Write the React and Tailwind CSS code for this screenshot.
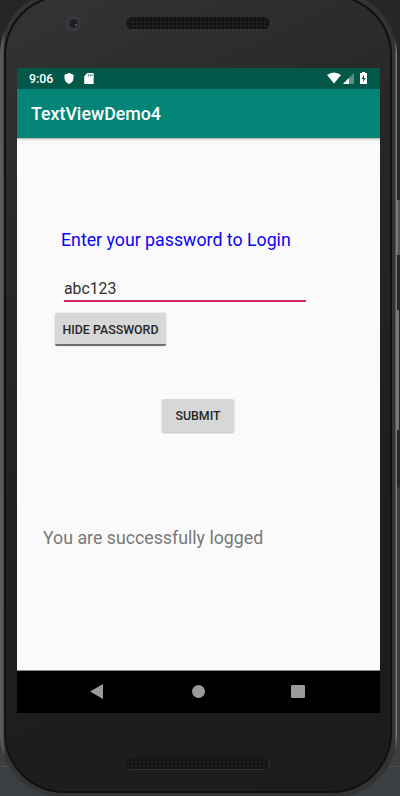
function Speaker() {
  return (
    <div className="ml-[119px] flex h-[13px] w-[145px] items-center rounded-full border-r border-b border-[#353535] bg-[#161616] px-[3px]">
      <div className="h-[11px] w-full bg-[radial-gradient(circle,#0a0a0a_0.6px,#1c1c1c_1.6px)] bg-[size:4px_4px]" />
    </div>
  );
}

function StatusBar() {
  return (
    <div className="flex h-[21px] items-center bg-[#045849] pl-3 text-white">
      <span className="w-[35px] pt-px text-[12.3px] font-medium leading-[20px]">9:06</span>
      <svg width="10" height="11" viewBox="0 0 10 11" fill="white">
        <path d="M5 0 9.5 1.7V5C9.5 7.8 7.5 10 5 11 2.5 10 .5 7.8 .5 5V1.7Z" />
      </svg>
      <svg className="ml-[10px]" width="10" height="11" viewBox="0 0 10 11">
        <path d="M3.3 0H9Q9.7 0 9.7.8V10Q9.7 11 8.8 11H1Q.2 11 .2 10V3.2Z" fill="white" />
        <path d="M4 1.2h1v2H4zM5.8 1.2h1v2h-1zM7.5 1.2h1v2h-1z" fill="#3b8678" />
      </svg>
      <svg className="mb-[2px] ml-[233px]" width="14" height="12" viewBox="0 0 14 12">
        <path d="M0 3Q7-2 14 3L7 11.5Z" fill="white" />
      </svg>
      <svg className="ml-[2px]" width="11" height="11" viewBox="0 0 11 11">
        <path d="M11 0V11H0Z" fill="#5a9085" />
        <path d="M6 5V11H0Z" fill="white" />
      </svg>
      <svg className="mb-[1px] ml-[6px]" width="7" height="12" viewBox="0 0 7 12">
        <path d="M2 0H5V1H7V12H0V1H2Z" fill="white" />
        <path d="M4 3 1.5 7H3.2V10L5.6 6H4Z" fill="#045849" />
      </svg>
    </div>
  );
}

function NavBar() {
  return (
    <div className="flex h-[43px] items-center border-t border-[#888] bg-black pb-[2px]">
      <svg className="ml-[73px]" width="13" height="15" viewBox="0 0 13 15">
        <path d="M13 0V15L0 7.5Z" fill="#9b9b9b" />
      </svg>
      <div className="ml-[89px] size-[13px] rounded-full bg-[#9b9b9b]" />
      <div className="ml-[86px] h-[13px] w-[14px] rounded-[1px] bg-[#9b9b9b]" />
    </div>
  );
}

function Screen() {
  return (
    <div className="ml-[11px] flex h-[645px] w-[363px] flex-col bg-[#fafafa]">
      <StatusBar />
      <div className="z-10 flex h-[49px] items-center bg-[#028577] pl-[14px] text-[17.8px] font-medium text-white shadow-[0_1px_2px_rgba(0,0,0,0.35)]">
        <span className="pt-[2px]">TextViewDemo4</span>
      </div>
      <div className="flex flex-1 flex-col items-start">
        <p className="mt-[90px] ml-[44px] text-[17.75px] leading-6 whitespace-nowrap text-[#0b05f5]">
          Enter your password to Login
        </p>
        <div className="mt-[24px] ml-[47px] h-[26px] w-[242px] border-b-2 border-[#d42660] pt-px text-[15.8px] leading-6 text-[#303030]">
          abc123
        </div>
        <button className="mt-[11px] ml-[38px] h-[33px] w-[111px] rounded-[2px] border-b-2 border-[#6d6e6e] bg-[#d6d7d7] pt-[3px] text-[12.4px] font-medium whitespace-nowrap text-[#262626] shadow-[0_0_2px_rgba(0,0,0,0.2)]">
          HIDE PASSWORD
        </button>
        <button className="mt-[53px] ml-[145px] h-[33px] w-[72px] rounded-[2px] bg-[#d6d7d7] pt-px text-[12.4px] font-medium text-[#262626] shadow-[0_1px_2px_rgba(0,0,0,0.25)]">
          SUBMIT
        </button>
        <p className="mt-[94px] ml-[26px] text-[17.75px] leading-6 whitespace-nowrap text-[#787878]">
          You are successfully logged
        </p>
      </div>
      <NavBar />
    </div>
  );
}

export default function App() {
  return (
    <div className="flex h-[796px] w-[400px] overflow-hidden bg-[linear-gradient(to_bottom,#262626_0_485px,#3b3f41_490px_766px,#4a4d4f_766px_767px,#3b3f41_767px)] font-['Roboto',sans-serif]">
      <div className="mt-[-9px] h-[807px] w-[397px] shrink-0 rounded-[64px] bg-[linear-gradient(to_right,#5d5d5d_0,#555_3px,#353535_5px,#343233_391px,#343233_395px,#7b7b7b_396px)] pt-[4px] pr-[5px] pb-[5px] pl-[4px]">
        <div className="h-full rounded-[60px] bg-[#101010] px-[2px] py-[2px]">
          <div className="h-full overflow-hidden rounded-[58px] bg-[linear-gradient(155deg,#343335_0%,#292929_25%,#1e1e1e_65%,#1c1c1c_100%)] pt-[17px]">
            <div className="flex h-[19px] items-center">
              <div className="ml-[60px] flex size-[15px] shrink-0 items-center justify-center rounded-full bg-[#3a393b]">
                <div className="flex size-[9px] items-center justify-center rounded-full bg-[#201f28]">
                  <div className="mt-[3px] ml-[4px] size-[2px] rounded-full bg-[#705064]" />
                </div>
              </div>
              <div className="-ml-[74px]">
                <Speaker />
              </div>
            </div>
            <div className="mt-[35px]">
              <Screen />
            </div>
            <div className="mt-[44px]">
              <Speaker />
            </div>
          </div>
        </div>
      </div>
      <div className="flex w-[3px] flex-col">
        <div className="mt-[200px] h-[55px] border-l border-[#777] bg-[#555]" />
        <div className="mt-[55px] h-[120px] w-[2px] bg-[#777]" />
      </div>
    </div>
  );
}
